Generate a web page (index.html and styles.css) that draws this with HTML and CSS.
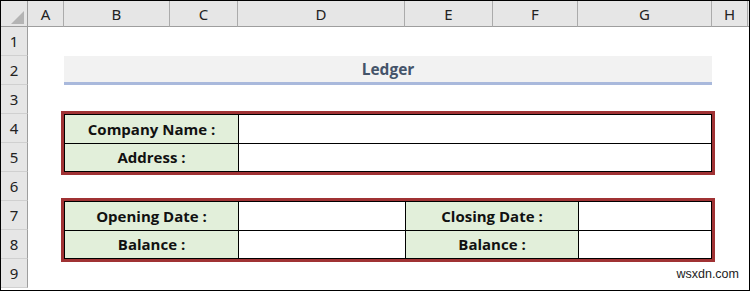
FILE: index.html
```html
<!DOCTYPE html>
<html lang="en">

<head>
  <meta charset="UTF-8">
  <meta name="viewport" content="width=device-width, initial-scale=1.0">
  <title>Ledger</title>
  <link rel="stylesheet" href="styles.css">
</head>

<body>
  <div class="sheet">
    <!-- column headers -->
    <div class="corner">
      <svg width="14" height="14" viewBox="0 0 14 14"><polygon points="13,0 13,13 0,13" fill="#b4b4b4" /></svg>
    </div>
    <div class="col-head">A</div>
    <div class="col-head">B</div>
    <div class="col-head">C</div>
    <div class="col-head">D</div>
    <div class="col-head">E</div>
    <div class="col-head">F</div>
    <div class="col-head">G</div>
    <div class="col-head">H</div>
    <div class="col-head col-rest"></div>

    <!-- row headers -->
    <div class="row-head">1</div>
    <div class="row-head">2</div>
    <div class="row-head">3</div>
    <div class="row-head">4</div>
    <div class="row-head">5</div>
    <div class="row-head">6</div>
    <div class="row-head">7</div>
    <div class="row-head">8</div>
    <div class="row-head">9</div>

    <div class="banner">Ledger</div>

    <div class="box box-company">
      <div class="label">Company Name :</div>
      <div class="value"></div>
      <div class="label">Address :</div>
      <div class="value"></div>
    </div>

    <div class="box box-dates">
      <div class="label">Opening Date :</div>
      <div class="value"></div>
      <div class="label">Closing Date :</div>
      <div class="value"></div>
      <div class="label">Balance :</div>
      <div class="value"></div>
      <div class="label">Balance :</div>
      <div class="value"></div>
    </div>

    <div class="watermark">wsxdn.com</div>
  </div>
</body>

</html>
```

FILE: styles.css
```css
body {
  margin: 0;
  background-color: #fff;
}

.sheet {
  box-sizing: border-box;
  width: 750px;
  height: 291px;
  border: 1px solid #000;
  display: grid;
  grid-template-columns: 27px 36px 106px 68px 167px 88px 85px 134px 36px 1fr;
  grid-template-rows: 26px repeat(9, 29px) 1fr;
  font-family: "Noto Sans", "Open Sans", sans-serif;
  overflow: hidden;
}

.corner,
.col-head {
  box-sizing: border-box;
  background-color: #e6e6e6;
  border-right: 1px solid #ababab;
  border-bottom: 1px solid #9e9e9e;
}

.corner {
  display: flex;
  align-items: flex-end;
  justify-content: flex-end;
  padding: 0 2px 1px 0;
  border-right-color: #9e9e9e;
}

.col-head {
  display: flex;
  align-items: center;
  justify-content: center;
  font-size: 15px;
  color: #222;
}

.col-rest {
  border-right: none;
}

.row-head {
  grid-column: 1;
  box-sizing: border-box;
  display: flex;
  align-items: center;
  justify-content: center;
  background-color: #e6e6e6;
  border-right: 1px solid #9e9e9e;
  border-bottom: 1px solid #d0d0d0;
  font-size: 15px;
  color: #222;
}

.banner {
  grid-column: 3 / 9;
  grid-row: 3;
  box-sizing: border-box;
  display: flex;
  align-items: center;
  justify-content: center;
  background-color: #f2f2f2;
  border-bottom: 3px solid #a9b9dc;
  font-family: "Open Sans", Lato, sans-serif;
  font-weight: bold;
  font-size: 15.5px;
  color: #44546a;
}

.box {
  grid-column: 3 / 9;
  display: grid;
  gap: 1px;
  padding: 1px;
  background-color: #000;
  outline: 3px solid #a03234;
}

.box-company {
  grid-row: 5 / 7;
  grid-template-columns: 173px 1fr;
}

.box-dates {
  grid-row: 8 / 10;
  grid-template-columns: 173px 166px 172px 1fr;
}

.label {
  display: flex;
  align-items: center;
  justify-content: center;
  background-color: #e2efda;
  font-family: "Open Sans", Lato, sans-serif;
  font-weight: bold;
  font-size: 15px;
  color: #111;
}

.value {
  background-color: #fff;
}

.watermark {
  grid-column: 8 / 10;
  grid-row: 10;
  align-self: center;
  justify-self: end;
  padding-right: 9px;
  font-family: "Liberation Sans", Arial, sans-serif;
  font-size: 12.5px;
  color: #222;
}
```
